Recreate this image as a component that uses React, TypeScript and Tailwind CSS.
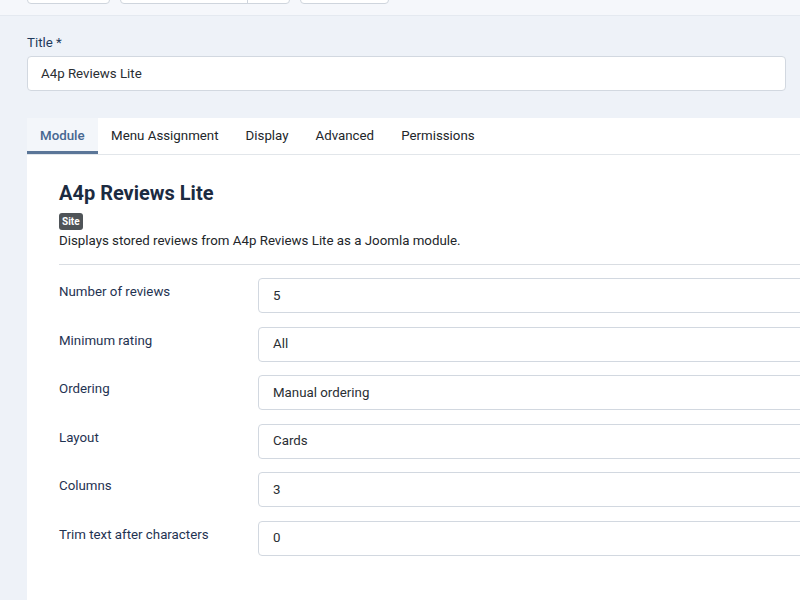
import React from "react";

const rows: [string, string][] = [
  ["Number of reviews", "5"],
  ["Minimum rating", "All"],
  ["Ordering", "Manual ordering"],
  ["Layout", "Cards"],
  ["Columns", "3"],
  ["Trim text after characters", "0"],
];

const tabs = ["Module", "Menu Assignment", "Display", "Advanced", "Permissions"];

export default function App() {
  return (
    <div
      className="w-[800px] h-[600px] overflow-hidden bg-[#eef2f8] text-[#22262a]"
      style={{ fontFamily: "Roboto, 'Noto Sans', sans-serif" }}
    >
      {/* toolbar */}
      <div className="h-[16px] bg-[#f5f7fb] border-b border-[#e4e9f0] overflow-hidden flex items-end">
        <div className="flex gap-[10px] pl-[27px] mb-[11px]">
          <div className="w-[83px] h-[34px] bg-white border border-[#cfd5dd] rounded-[4px]" />
          <div className="flex w-[170px] h-[34px] bg-white border border-[#cfd5dd] rounded-[4px]">
            <div className="w-[127px] border-r border-[#cfd5dd]" />
          </div>
          <div className="w-[89px] h-[34px] bg-white border border-[#cfd5dd] rounded-[4px]" />
        </div>
      </div>

      {/* title */}
      <div className="pl-[27px] pr-[14px] pt-[17px]">
        <label className="block text-[13.3px] leading-[20px] text-[#1f3a5c] mb-[3px]">Title *</label>
        <div className="h-[35px] bg-white border border-[#d2d8e0] rounded-[4px] flex items-center pl-[13px] text-[13.3px] text-[#2a2e33]">
          A4p Reviews Lite
        </div>
      </div>

      {/* tabs + card */}
      <div className="ml-[27px] mt-[27px]">
        <div className="flex h-[37px] bg-white border-b border-[#e2e6ea] text-[13.3px]">
          {tabs.map((t, i) => (
            <div
              key={t}
              className={
                i === 0
                  ? "px-[13px] flex items-center bg-[#f3f6fa] text-[#466791] font-medium border-b-[3px] border-[#5b7698] pt-[3px]"
                  : "px-[13.5px] flex items-center text-[#22262a]"
              }
            >
              {t}
            </div>
          ))}
        </div>

        <div className="bg-white h-[500px] pl-[32px] pt-[25px]">
          <h2 className="text-[20px] leading-[26px] font-bold text-[#1c2b41]">A4p Reviews Lite</h2>
          <div className="mt-[7px] w-fit h-[17px] flex items-center bg-[#4f5458] text-white text-[10px] font-bold px-[3px] rounded-[3px]">
            Site
          </div>
          <p className="mt-[1px] text-[13.3px] leading-[20px] text-[#22262a]">
            Displays stored reviews from A4p Reviews Lite as a Joomla module.
          </p>
          <div className="border-t border-[#d9dde2] mt-[13px]" />
          <div className="flex flex-col gap-[13.5px] pt-[13px]">
            {rows.map(([l, v]) => (
              <div key={l} className="flex">
                <div className="w-[199px] shrink-0 text-[13.3px] leading-[20px] text-[#1f3352] pt-[4px]">{l}</div>
                <div className="w-[600px] shrink-0 h-[35px] bg-white border border-[#d2d8e0] rounded-[4px] flex items-center pl-[14px] text-[13.3px] text-[#2a2e33]">
                  {v}
                </div>
              </div>
            ))}
          </div>
        </div>
      </div>
    </div>
  );
}
